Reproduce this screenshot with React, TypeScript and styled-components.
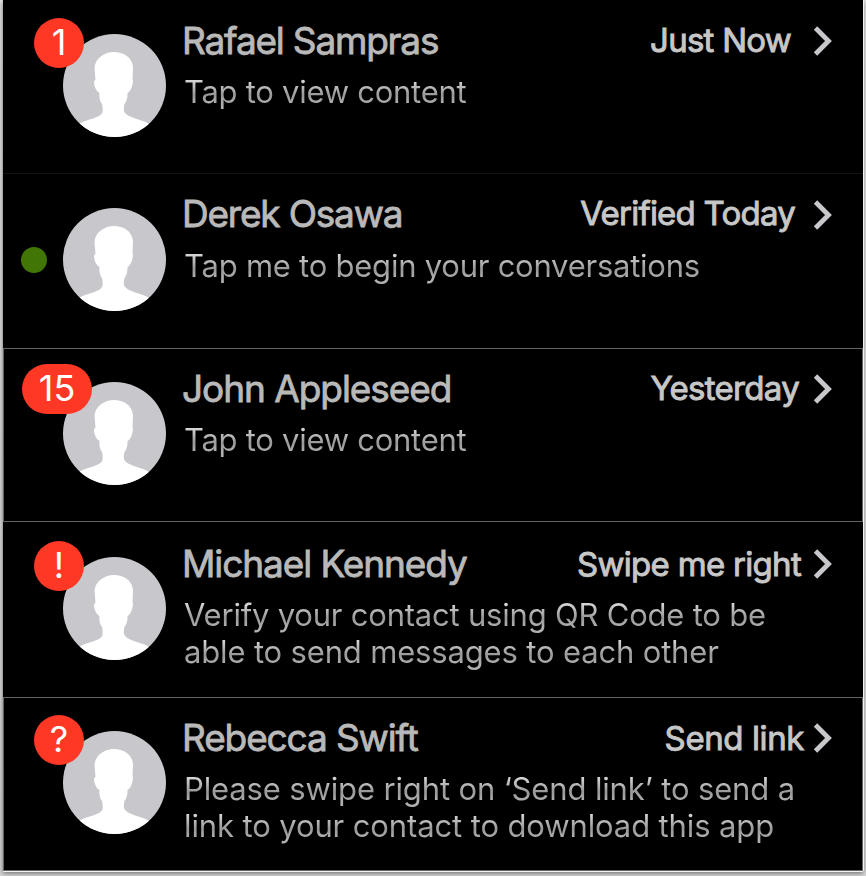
import React from 'react';
import styled, { createGlobalStyle } from 'styled-components';

const GlobalStyle = createGlobalStyle`
  *, *::before, *::after { box-sizing: border-box; }
  body { margin: 0; background: #d9d9d9; font-family: Inter, "Liberation Sans", sans-serif; }
`;

const Page = styled.div`
  width: 866px;
  height: 876px;
  padding: 0 3px 5px;
  overflow: hidden;
  background: linear-gradient(#e2e2e2, #d6d6d6);
`;

const List = styled.ul`
  width: 860px;
  height: 871px;
  margin: 0;
  padding: 0;
  list-style: none;
  background: #000;
  box-shadow: 0 1px 0 #f2f2f2, 1px 0 0 #f2f2f2, 0 2px 5px rgba(0, 0, 0, 0.55);
`;

const Row = styled.li<{ $height: number; $frame: 'line' | 'none' | 'box' }>`
  display: flex;
  height: ${p => p.$height}px;
  padding-left: 60px;
  box-shadow: ${p =>
    p.$frame === 'box' ? 'inset 0 0 0 1px #646464' : p.$frame === 'line' ? 'inset 0 -1px #141414' : 'none'};
`;

const AvatarSlot = styled.div<{ $top: number }>`
  position: relative;
  flex: none;
  width: 103px;
  height: 103px;
  margin-top: ${p => p.$top}px;
`;

const AvatarSvg = styled.svg`
  display: block;
  width: 103px;
  height: 103px;
`;

const Badge = styled.span<{ $wide?: boolean }>`
  position: absolute;
  top: ${p => (p.$wide ? -18 : -16)}px;
  right: ${p => (p.$wide ? 74 : 82)}px;
  width: ${p => (p.$wide ? 70 : 50)}px;
  height: 50px;
  border-radius: 25px;
  background: #ff3826;
  color: #fff;
  font-size: 36px;
  line-height: 49px;
  text-align: center;
`;

const Online = styled.span`
  position: absolute;
  top: 39px;
  left: -42px;
  width: 26px;
  height: 26px;
  border-radius: 50%;
  background: #417505;
`;

const Body = styled.div<{ $top: number }>`
  flex: 1;
  min-width: 0;
  padding: ${p => p.$top}px 30px 0 16px;
`;

const Heading = styled.div`
  display: flex;
  height: 46px;
  align-items: center;
`;

const Name = styled.span<{ $track: number; $lift?: number }>`
  flex: 1;
  margin-top: ${p => -2 * (p.$lift ?? 0)}px;
  color: #b9b9b9;
  font-size: 37px;
  line-height: 46px;
  letter-spacing: ${p => p.$track}px;
  white-space: nowrap;
  -webkit-text-stroke: 0.8px #b9b9b9;
`;

const Status = styled.span<{ $track: number; $gap: number; $lift: number }>`
  margin-top: ${p => -2 * p.$lift}px;
  margin-right: ${p => p.$gap}px;
  color: #c7c7c7;
  font-size: 33px;
  line-height: 46px;
  letter-spacing: ${p => p.$track}px;
  white-space: nowrap;
  -webkit-text-stroke: 0.9px #c7c7c7;
`;

const ChevronSvg = styled.svg`
  flex: none;
  width: 20px;
  height: 30px;
`;

const Message = styled.p`
  margin: 10px 0 0 2px;
  font-size: 31px;
  line-height: 36.5px;
`;

const Line = styled.span<{ $track: number }>`
  display: block;
  width: max-content;
  letter-spacing: ${p => p.$track}px;
  white-space: nowrap;
  background: linear-gradient(#d8d8d8 6px, #bebebe 12px, #989898 21px, #b0b0b0 30px);
  background-clip: text;
  -webkit-background-clip: text;
  color: transparent;
`;

const Avatar = () => (
  <AvatarSvg viewBox="0 0 103 103">
    <defs>
      <clipPath id="disc"><circle cx="51.5" cy="51.5" r="51.5" /></clipPath>
    </defs>
    <circle cx="51.5" cy="51.5" r="51.5" fill="#c8c7cc" />
    <path
      clipPath="url(#disc)"
      fill="#fff"
      d="M51 18C60 18 69 23 70 33L69.500 45.500Q70.500 46 69.500 50C68.500 55 67 57.500 64.500 59C64.500 64 64 66.500 61.500 70Q60.500 73 61 77C63 84 79 85 86 90V104H16V90C24 85 38 84 39.500 78Q40 73 39 70C37 67 36 64 36.500 59C33 57 31.500 53 31 49Q31 46 32.500 46L31.500 34C32 24 42 18 51 18Z"
    />
  </AvatarSvg>
);

const Chevron = () => (
  <ChevronSvg viewBox="0 0 20 30">
    <path d="M2.500 2L15.500 15L2.500 28" fill="none" stroke="#c8c7cc" strokeWidth="4.800" />
  </ChevronSvg>
);

interface Contact {
  name: string;
  nameTrack: number;
  nameLift?: number;
  status: string;
  statusTrack: number;
  statusLift: number;
  gap: number;
  lines: { text: string; track: number }[];
  badge?: string;
  height: number;
  top: number;
  textTop: number;
  frame: 'line' | 'none' | 'box';
}

const contacts: Contact[] = [
  { name: 'Rafael Sampras', nameTrack: -1.2, status: 'Just Now', statusTrack: -0.75, statusLift: 1, gap: 22, badge: '1', height: 174, top: 34, textTop: 18, frame: 'line',
    lines: [{ text: 'Tap to view content', track: -0.27 }] },
  { name: 'Derek Osawa', nameTrack: -1.2, nameLift: 1, status: 'Verified Today', statusTrack: -0.77, statusLift: 2, gap: 18, height: 174, top: 34, textTop: 18, frame: 'none',
    lines: [{ text: 'Tap me to begin your conversations', track: -0.24 }] },
  { name: 'John Appleseed', nameTrack: -1.05, status: 'Yesterday', statusTrack: -0.7, statusLift: 1, gap: 14, badge: '15', height: 174, top: 34, textTop: 18, frame: 'box',
    lines: [{ text: 'Tap to view content', track: -0.27 }] },
  { name: 'Michael Kennedy', nameTrack: -1.08, status: 'Swipe me right', statusTrack: -0.7, statusLift: 0, gap: 12, badge: '!', height: 175, top: 35, textTop: 19, frame: 'none',
    lines: [{ text: 'Verify your contact using QR Code to be', track: -0.21 }, { text: 'able to send messages to each other', track: -0.16 }] },
  { name: 'Rebecca Swift', nameTrack: -1.12, status: 'Send link', statusTrack: -0.4, statusLift: 0, gap: 9, badge: '?', height: 174, top: 34, textTop: 18, frame: 'box',
    lines: [{ text: 'Please swipe right on ‘Send link’ to send a', track: -0.14 }, { text: 'link to your contact to download this app', track: -0.12 }] },
];

export default function App() {
  return (
    <Page>
      <GlobalStyle />
      <List>
        {contacts.map(c => (
          <Row key={c.name} $height={c.height} $frame={c.frame}>
            <AvatarSlot $top={c.top}>
              <Avatar />
              {c.badge ? <Badge $wide={c.badge.length > 1}>{c.badge}</Badge> : <Online />}
            </AvatarSlot>
            <Body $top={c.textTop}>
              <Heading>
                <Name $track={c.nameTrack} $lift={c.nameLift}>{c.name}</Name>
                <Status $track={c.statusTrack} $gap={c.gap} $lift={c.statusLift}>{c.status}</Status>
                <Chevron />
              </Heading>
              <Message>
                {c.lines.map(l => (
                  <Line key={l.text} $track={l.track}>{l.text}</Line>
                ))}
              </Message>
            </Body>
          </Row>
        ))}
      </List>
    </Page>
  );
}
